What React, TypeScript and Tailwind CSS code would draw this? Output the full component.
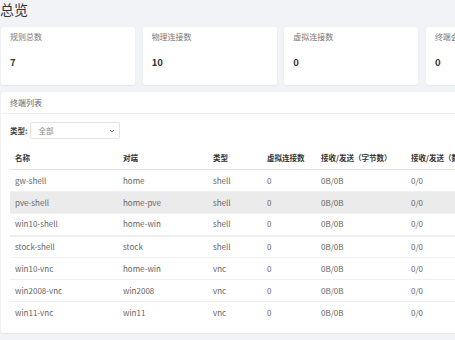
import React from 'react';

const stats = [
  { label: '规则总数', value: '7' },
  { label: '物理连接数', value: '10' },
  { label: '虚拟连接数', value: '0' },
  { label: '终端会话数', value: '0' },
];

const rows = [
  { name: 'gw-shell', peer: 'home', type: 'shell' },
  { name: 'pve-shell', peer: 'home-pve', type: 'shell' },
  { name: 'win10-shell', peer: 'home-win', type: 'shell' },
  { name: 'stock-shell', peer: 'stock', type: 'shell' },
  { name: 'win10-vnc', peer: 'home-win', type: 'vnc' },
  { name: 'win2008-vnc', peer: 'win2008', type: 'vnc' },
  { name: 'win11-vnc', peer: 'win11', type: 'vnc' },
];

const headers = ['名称', '对端', '类型', '虚拟连接数', '接收/发送（字节数）', '接收/发送（数据包）'];

const font = { fontFamily: '"Noto Sans CJK SC", "Noto Sans", sans-serif' };

export default function App() {
  return (
    <div
      className="w-[455px] h-[340px] overflow-hidden bg-[#f2f3f7] text-[#333]"
      style={font}
    >
      <div className="w-[560px] pl-[1px]">
        {/* Title */}
        <h1 className="text-[14px] leading-[18px] -ml-[1px] text-[#333] font-normal">总览</h1>

        {/* Stat cards */}
        <div className="mt-[9px] grid grid-cols-4 gap-[7.5px]">
          {stats.map((s) => (
            <div
              key={s.label}
              className="h-[58px] bg-white rounded-[3px] shadow-[0_1px_2px_rgba(0,0,0,0.06)] px-[9px] pt-[5px]"
            >
              <div className="text-[8px] leading-[10px] text-[#777] whitespace-nowrap">{s.label}</div>
              <div className="mt-[15px] text-[9.5px] leading-[11px] font-bold text-[#333]">{s.value}</div>
            </div>
          ))}
        </div>

        {/* Terminal list */}
        <div className="mt-[7px] bg-white rounded-[3px] shadow-[0_1px_2px_rgba(0,0,0,0.06)] h-[241px]">
          <div className="h-[22px] border-b border-[#eeeeee] px-[9px] flex items-center text-[8px] text-[#666]">
            终端列表
          </div>

          <div className="px-[9px] pt-[8px]">
            <div className="flex items-center gap-[3px] h-[17px]">
              <span className="text-[7.5px] font-bold text-[#444]">类型:</span>
              <div className="w-[90px] h-[17px] border border-[#e2e2e2] rounded-[2px] flex items-center justify-between pl-[7px] pr-[4px]">
                <span className="text-[7.5px] text-[#888]">全部</span>
                <svg width="6" height="4" viewBox="0 0 6 4" className="text-[#777]">
                  <path d="M1 1 L3 3 L5 1" fill="none" stroke="currentColor" strokeWidth="0.9" />
                </svg>
              </div>
            </div>

            <table className="mt-[8px] table-fixed border-collapse text-[7.5px] w-[520px]">
              <colgroup>
                <col className="w-[108px]" />
                <col className="w-[90px]" />
                <col className="w-[54px]" />
                <col className="w-[54px]" />
                <col className="w-[90px]" />
                <col className="w-[124px]" />
              </colgroup>
              <thead>
                <tr className="h-[22.5px] border-b border-[#e4e4e4]">
                  {headers.map((h) => (
                    <th key={h} className="text-left font-bold text-[#333] pl-[5px] whitespace-nowrap">
                      {h}
                    </th>
                  ))}
                </tr>
              </thead>
              <tbody className="text-[8px]">
                {rows.map((r, i) => (
                  <tr
                    key={r.name}
                    className={`h-[22px] ${i === 2 ? 'border-b-2 border-[#eeeeee]' : i === rows.length - 1 ? '' : 'border-b border-[#f0f0f0]'} ${i === 1 ? 'bg-[#ebebeb]' : ''}`}
                  >
                    <td className="pl-[5px] text-[#666]">{r.name}</td>
                    <td className="pl-[5px] text-[#666]">{r.peer}</td>
                    <td className="pl-[5px] text-[#666]">{r.type}</td>
                    <td className="pl-[5px] text-[#666]">0</td>
                    <td className="pl-[5px] text-[#666]">0B/0B</td>
                    <td className="pl-[5px] text-[#666]">0/0</td>
                  </tr>
                ))}
              </tbody>
            </table>
          </div>
        </div>
      </div>
    </div>
  );
}
